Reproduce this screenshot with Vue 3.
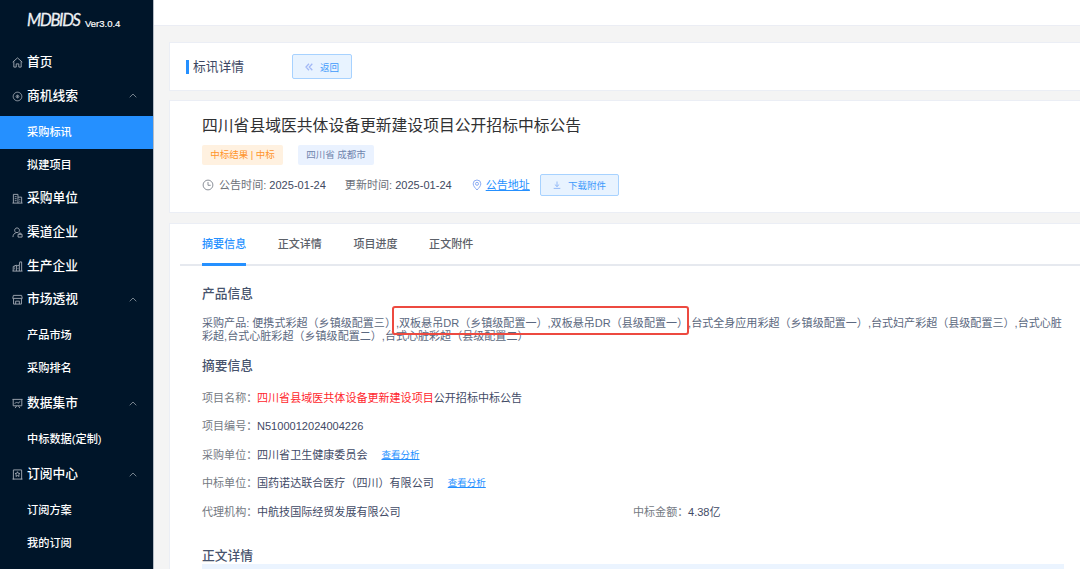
<template>
  <div class="layout">
    <aside class="sidebar">
      <div class="brand">
        <span class="brand__name">MDBIDS</span>
        <span class="brand__version">Ver3.0.4</span>
      </div>
      <nav class="menu">
        <template v-for="item in menus" :key="item.title">
          <div class="menu__item">
            <svg class="menu__icon" viewBox="0 0 12 12">
              <path v-for="d in icons[item.icon]" :key="d" :d="d" />
            </svg>
            <span>{{ item.title }}</span>
            <svg v-if="item.children" class="menu__arrow" viewBox="0 0 8 5">
              <path d="M.7 4.3 4 1l3.300 3.300" />
            </svg>
          </div>
          <div v-if="item.children" :class="['submenu', { 'submenu--loose': item.loose }]">
            <div
              v-for="child in item.children"
              :key="child"
              :class="['submenu__item', { 'submenu__item--active': child === current }]"
            >
              {{ child }}
            </div>
          </div>
        </template>
      </nav>
    </aside>

    <main class="main">
      <header class="topbar"></header>
      <div class="content">
        <section class="card page-head">
          <h1 class="page-head__title">标讯详情</h1>
          <button class="btn btn--back">
            <svg viewBox="0 0 8 8"><path d="M4 .8 1 4l3 3.200M7.300 .8 4.300 4l3 3.200" /></svg>
            <span>返回</span>
          </button>
        </section>

        <section class="card notice">
          <h2 class="notice__title">四川省县域医共体设备更新建设项目公开招标中标公告</h2>
          <div class="notice__tags">
            <span class="tag tag--result">中标结果 | 中标</span>
            <span class="tag tag--area">四川省 成都市</span>
          </div>
          <div class="notice__meta">
            <svg class="clock" viewBox="0 0 12 12"><circle cx="6" cy="6" r="4.900" /><path d="M6 3v3.300h2.700" /></svg>
            <span class="meta-time"><i>公告时间:</i> 2025-01-24</span>
            <span class="meta-time meta-time--update"><i>更新时间:</i> 2025-01-24</span>
            <svg class="pin" viewBox="0 0 10 12"><path d="M5 11C3.200 9 1.200 7 1.200 4.800a3.800 3.800 0 0 1 7.600 0C8.800 7 6.800 9 5 11z" /><circle cx="5" cy="4.800" r="1.500" /></svg>
            <a class="link">公告地址</a>
            <button class="btn btn--download">
              <svg viewBox="0 0 8 8"><path d="M4 .5v5M1.800 3.500 4 5.600l2.200-2.100M.7 7.400h6.600" /></svg>
              <span>下载附件</span>
            </button>
          </div>
        </section>

        <section class="card detail">
          <div class="tabs">
            <div v-for="(tab, index) in tabs" :key="tab" :class="['tabs__item', { 'tabs__item--active': index === 0 }]">
              {{ tab }}
            </div>
          </div>
          <div class="detail__body">
            <h3 class="section-title">产品信息</h3>
            <div class="products">
              <div class="products__line">采购产品: {{ products[0] }}</div>
              <div class="products__line">{{ products[1] }}</div>
              <div class="products__mark"></div>
            </div>
            <h3 class="section-title section-title--summary">摘要信息</h3>
            <div v-for="row in rows" :key="row.label" class="row">
              <div class="row__main">
                <span class="row__label">{{ row.label }}：</span>
                <span class="row__value"><em v-if="row.hit">{{ row.hit }}</em>{{ row.value }}</span>
                <a v-if="row.analysis" class="link link--small">查看分析</a>
              </div>
              <div v-if="row.amount" class="row__side">
                <span class="row__label">中标金额：</span>
                <span class="row__value">{{ row.amount }}</span>
              </div>
            </div>
            <h3 class="section-title section-title--text">正文详情</h3>
            <div class="text-panel"></div>
          </div>
        </section>
      </div>
    </main>
  </div>
</template>

<script setup>
import { ref } from "vue";

const current = ref("采购标讯");

const menus = [
  { title: "首页", icon: "home" },
  { title: "商机线索", icon: "target", children: ["采购标讯", "拟建项目"] },
  { title: "采购单位", icon: "building" },
  { title: "渠道企业", icon: "user" },
  { title: "生产企业", icon: "factory" },
  { title: "市场透视", icon: "shop", children: ["产品市场", "采购排名"], loose: true },
  { title: "数据集市", icon: "board", children: ["中标数据(定制)"], loose: true },
  { title: "订阅中心", icon: "star", children: ["订阅方案", "我的订阅"] },
];

const icons = {
  home: ["M.8 5.600 6 1l5.200 4.600", "M2 4.800V11h2.600V7.500h2.800V11H10V4.800"],
  target: ["M6 1.300a4.700 4.700 0 1 0 .01 0z", "M6 4.500a1.500 1.500 0 1 0 .01 0z", "M6 5v2"],
  building: ["M1.500 11V1.500h5V11", "M6.500 4.500h4V11", "M.5 11h11", "M3 4h2M3 6.200h2M3 8.400h2M8 7h1M8 9h1"],
  user: ["M5.500 1a2.600 2.600 0 1 0 .01 0z", "M1 11c.2-2.600 1.500-4.300 3.500-4.800", "M6.600 8h4.400v3H6.600z", "M7.800 8V6.700h2V8"],
  factory: ["M1.300 11V6l3.500-1.500V11", "M4.800 5.500 8 4.500V11", "M8 4.500 8.500 1h2V11", "M.5 11h11", "M2.300 6.500h1M2.300 8.500h1M6 8h1"],
  shop: ["M1.500 1.500h9l.7 3.300H.8z", "M1.700 5v6h8.600V5", "M4 11V7.800h4V11"],
  board: ["M.5 1.500h11M1.300 1.500v7h9.400v-7", "M3 6.300l2-2 1.500 1.500L9 3.700", "M3.500 11 5 8.500M8.500 11 7 8.500"],
  star: ["M1.500 1h9v10h-9z", "M6 3l.8 1.700 1.900.2-1.400 1.300.4 1.900L6 7.200l-1.700.9.4-1.900-1.400-1.300 1.900-.2z", "M.5 11h2M9.500 11h2"],
};

const tabs = ["摘要信息", "正文详情", "项目进度", "正文附件"];

const products = [
  "便携式彩超（乡镇级配置三）,双板悬吊DR（乡镇级配置一）,双板悬吊DR（县级配置一）,台式全身应用彩超（乡镇级配置一）,台式妇产彩超（县级配置三）,台式心脏",
  "彩超,台式心脏彩超（乡镇级配置二）,台式心脏彩超（县级配置二）",
];

const rows = [
  { label: "项目名称", hit: "四川省县域医共体设备更新建设项目", value: "公开招标中标公告" },
  { label: "项目编号", value: "N5100012024004226" },
  { label: "采购单位", value: "四川省卫生健康委员会", analysis: true },
  { label: "中标单位", value: "国药诺达联合医疗（四川）有限公司", analysis: true },
  { label: "代理机构", value: "中航技国际经贸发展有限公司", amount: "4.38亿" },
];
</script>

<style>
body {
  margin: 0;
  overflow: hidden;
}
</style>

<style scoped>
.layout {
  display: flex;
  height: 569px;
  overflow: hidden;
  background: #f4f4f4;
  color: #47536d;
  font-family: "Liberation Sans", "Noto Sans CJK SC", sans-serif;
  font-size: 11.06px;
}

svg {
  flex: none;
  fill: none;
  stroke: currentColor;
}

h1,
h2,
h3 {
  margin: 0;
}

i,
em {
  font-style: normal;
}

.sidebar {
  box-sizing: border-box;
  flex: none;
  width: 154px;
  border-right: 1px solid #b5bcc5;
  background: #001529;
  color: #fff;
}

.brand {
  display: flex;
  height: 45.5px;
  padding-left: 27px;
}

.brand__name {
  width: 58px;
  color: #eef1f4;
  font-family: Lato, sans-serif;
  font-size: 18px;
  font-style: italic;
  letter-spacing: -1.4px;
  line-height: 39px;
  transform: scaleX(0.92);
  transform-origin: left;
  -webkit-text-stroke: 0.3px #eef1f4;
}

.brand__version {
  font-size: 9.5px;
  line-height: 48px;
  -webkit-text-stroke: 0.2px #fff;
}

.menu__item {
  display: flex;
  align-items: center;
  height: 33.6px;
  padding: 0 16px 0 12px;
  font-size: 12.75px;
  font-weight: 500;
  line-height: 18px;
}

.menu__icon {
  width: 11px;
  height: 11px;
  margin-top: 1px;
  margin-right: 4px;
  color: #a2aab3;
}

.menu__arrow {
  width: 8px;
  height: 5px;
  margin-left: auto;
  color: #74808b;
}

.submenu {
  padding-top: 3px;
}

.submenu--loose {
  padding-bottom: 1.5px;
}

.submenu__item {
  height: 33px;
  padding-left: 27px;
  font-size: 11.2px;
  font-weight: 500;
  line-height: 32px;
}

.submenu__item--active {
  background: #2590ff;
}

.main {
  flex: 1;
  min-width: 0;
}

.topbar {
  height: 25px;
  border-bottom: 1px solid #ebedf4;
  background: #fff;
}

.content {
  display: flex;
  flex-direction: column;
  gap: 9px;
  padding: 16px 0 0 15px;
}

.card {
  box-sizing: border-box;
  border: 1px solid #ebeef5;
  border-right: 0;
  background: #fff;
}

.page-head {
  display: flex;
  align-items: center;
  height: 49px;
  padding-left: 16px;
}

.page-head__title {
  width: 102px;
  border-left: 3px solid #2590ff;
  padding-left: 4px;
  margin-right: -3px;
  color: #3b4763;
  font-size: 12.75px;
  font-weight: 400;
  line-height: 14px;
}

.btn {
  box-sizing: border-box;
  display: flex;
  align-items: center;
  justify-content: center;
  gap: 7px;
  padding: 0;
  border: 1px solid #a7d2ff;
  border-radius: 2px;
  background: #e8f3ff;
  color: #3d99fb;
  font-family: inherit;
  font-size: 9.5px;
}

.btn svg {
  width: 8px;
  height: 8px;
  color: #7fabf5;
  stroke-width: 0.8;
}

.btn--back {
  width: 60px;
  height: 25px;
}

.btn--back svg {
  color: #a3b9f6;
  stroke-width: 1.3;
}

.btn--download {
  width: 79px;
  height: 22px;
  margin-left: 10px;
}

.notice {
  height: 113px;
  padding: 13px 0 0 32px;
}

.notice__title {
  color: #303133;
  font-size: 15.8px;
  font-weight: 400;
  line-height: 24px;
}

.notice__tags {
  display: flex;
  gap: 15px;
  margin-top: 7px;
}

.tag {
  box-sizing: border-box;
  height: 20px;
  border-radius: 2px;
  font-size: 9.5px;
  line-height: 20px;
  text-align: center;
}

.tag--result {
  width: 81px;
  background: #fff1e0;
  color: #ff942b;
}

.tag--area {
  width: 76px;
  background: #eaf2ff;
  color: #7084ad;
}

.notice__meta {
  display: flex;
  align-items: center;
  height: 22px;
  margin-top: 9px;
  color: #3f4a62;
  line-height: 20px;
}

.meta-time,
.notice__meta .link {
  margin-top: -1px;
}

.notice__meta i {
  color: #6b7078;
}

.clock {
  width: 12px;
  height: 12px;
  margin-right: 5px;
  color: #8b9099;
}

.meta-time--update {
  margin-left: 19px;
}

.pin {
  width: 10px;
  height: 12px;
  margin: 0 4px 0 20px;
  color: #7ea2f2;
  stroke-width: 0.9;
}

.link {
  color: #2590ff;
  text-decoration: underline;
}

.link--small {
  margin-left: 14px;
  font-size: 9.5px;
}

.detail {
  height: 400px;
  margin-top: 1px;
}

.tabs {
  display: flex;
  gap: 31.5px;
  height: 40px;
  margin-left: 10px;
  padding-left: 22px;
  border-bottom: 2px solid #e6e9ef;
}

.tabs__item {
  height: 39px;
  color: #5c6169;
  font-weight: 500;
  line-height: 41px;
}

.tabs__item--active {
  border-bottom: 3px solid #2590ff;
  color: #2590ff;
}

.detail__body {
  padding: 18px 16px 0 32px;
}

.section-title {
  color: #47536d;
  font-size: 12.75px;
  font-weight: 500;
  line-height: 20px;
}

.products {
  position: relative;
  height: 28px;
  margin-top: 13px;
  color: #5b6880;
  line-height: 13px;
  white-space: nowrap;
}

.products__mark {
  position: absolute;
  top: -11px;
  left: 190px;
  box-sizing: border-box;
  width: 297px;
  height: 29px;
  border: 2px solid #ed4a40;
  border-radius: 3px;
}

.section-title--summary {
  margin: 11px 0 8px;
}

.row {
  display: flex;
  height: 28.4px;
  line-height: 28px;
  white-space: nowrap;
}

.row__main {
  display: flex;
  width: 431px;
}

.row__label {
  width: 55px;
  color: #757a83;
}

.row__side {
  display: flex;
}

.row__value {
  color: #3f4a66;
}

.row__value em {
  color: #ff1f2d;
}

.section-title--text {
  margin-top: 20px;
}

.text-panel {
  height: 60px;
  margin-top: -2px;
  background: #ebf4ff;
}
</style>
